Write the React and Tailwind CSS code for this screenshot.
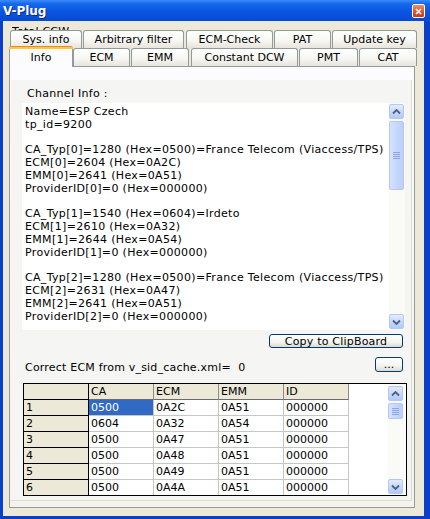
import React from "react";

const memoLines = [
  "Name=ESP Czech",
  "tp_id=9200",
  "",
  "CA_Typ[0]=1280 (Hex=0500)=France Telecom (Viaccess/TPS)",
  "ECM[0]=2604 (Hex=0A2C)",
  "EMM[0]=2641 (Hex=0A51)",
  "ProviderID[0]=0 (Hex=000000)",
  "",
  "CA_Typ[1]=1540 (Hex=0604)=Irdeto",
  "ECM[1]=2610 (Hex=0A32)",
  "EMM[1]=2644 (Hex=0A54)",
  "ProviderID[1]=0 (Hex=000000)",
  "",
  "CA_Typ[2]=1280 (Hex=0500)=France Telecom (Viaccess/TPS)",
  "ECM[2]=2631 (Hex=0A47)",
  "EMM[2]=2641 (Hex=0A51)",
  "ProviderID[2]=0 (Hex=000000)",
];

const rows = [
  ["1", "0500", "0A2C", "0A51", "000000"],
  ["2", "0604", "0A32", "0A54", "000000"],
  ["3", "0500", "0A47", "0A51", "000000"],
  ["4", "0500", "0A48", "0A51", "000000"],
  ["5", "0500", "0A49", "0A51", "000000"],
  ["6", "0500", "0A4A", "0A51", "000000"],
];

const topTabs = [
  { label: "Sys. info", w: "w-[72px]", ml: "ml-0" },
  { label: "Arbitrary filter", w: "w-[101px]", ml: "ml-[1px]" },
  { label: "ECM-Check", w: "w-[87px]", ml: "ml-[2px]" },
  { label: "PAT", w: "w-[57px]", ml: "ml-[1px]" },
  { label: "Update key", w: "w-[85px]", ml: "ml-[1px]" },
];

const frontTabs = [
  { label: "ECM", w: "w-[57px]", ml: "ml-0" },
  { label: "EMM", w: "w-[58px]", ml: "ml-[1px]" },
  { label: "Constant DCW", w: "w-[107px]", ml: "ml-[2px]" },
  { label: "PMT", w: "w-[59px]", ml: "ml-[1px]" },
  { label: "CAT", w: "w-[58px]", ml: "ml-[1px]" },
];

function Tab({ label, w, ml }) {
  return (
    <div
      className={`${w} ${ml} h-full shrink-0 flex items-center justify-center rounded-t-[3px] border border-b-0 border-[#919b9c] bg-[linear-gradient(to_bottom,#ffffff_0%,#f7f7f4_55%,#e6e4db_100%)] leading-none`}
    >
      {label}
    </div>
  );
}

function Chevron({ down }) {
  return (
    <svg width="9" height="6" viewBox="0 0 9 6">
      <path
        d={down ? "M1 1.5 L4.5 5 L8 1.5" : "M1 4.5 L4.5 1 L8 4.5"}
        fill="none"
        stroke="#4d6185"
        strokeWidth="1.8"
      />
    </svg>
  );
}

function SbButton({ down }) {
  return (
    <div className="h-[15px] w-[15px] shrink-0 rounded-[2px] border border-[#b4c8f6] bg-[linear-gradient(to_bottom,#e3ebfe,#c4d5fb_60%,#b4c9f8)] flex items-center justify-center">
      <Chevron down={down} />
    </div>
  );
}

function Thumb({ h }) {
  return (
    <div
      className={`${h} w-[15px] shrink-0 rounded-[2px] border border-[#b4c8f6] bg-[linear-gradient(to_right,#d6e2fe,#c7d7fc_50%,#bccffa)] flex flex-col items-center justify-center gap-[1px]`}
    >
      <div className="h-px w-[7px] bg-[#8da6e3]" />
      <div className="h-px w-[7px] bg-[#8da6e3]" />
      <div className="h-px w-[7px] bg-[#8da6e3]" />
      <div className="h-px w-[7px] bg-[#8da6e3]" />
    </div>
  );
}

function XpButton({ className, children }) {
  return (
    <div
      className={`${className} shrink-0 rounded-[3px] border border-[#003c74] bg-[linear-gradient(to_bottom,#ffffff,#f4f4f0_60%,#dcdad0)] flex items-center justify-center leading-none`}
    >
      {children}
    </div>
  );
}

export default function App() {
  return (
    <div className="w-[430px] h-[519px] overflow-hidden flex flex-col bg-[#0b3fc8] font-['DejaVu_Sans',Verdana,sans-serif] text-[11px] text-black">
      {/* title bar */}
      <div className="h-[21px] shrink-0 flex items-center justify-between pl-[3px] pr-[5px] pt-[1px] bg-[linear-gradient(to_bottom,#3d8cf8_0%,#1567ee_18%,#0a56e2_55%,#0749d2_100%)]">
        <span className="text-[12px] font-bold text-white [text-shadow:1px_1px_0_#0a2a86]">V-Plug</span>
        <div className="h-[14px] w-[13px] rounded-[2px] border border-white bg-[linear-gradient(to_bottom,#ec8e70,#d6522f_60%,#c43e1c)] flex items-center justify-center">
          <svg width="7" height="7" viewBox="0 0 7 7">
            <path d="M1 1 L6 6 M6 1 L1 6" stroke="#fff" strokeWidth="1.6" />
          </svg>
        </div>
      </div>

      {/* body */}
      <div className="flex-1 ml-[3px] mr-[6px] mb-[3px] bg-[#ece9d8] flex flex-col">
        <div className="mt-[3px] ml-[9px] h-[6px] overflow-hidden shrink-0">
          <div className="pt-[1px] leading-[13px] tracking-[0.2px]">Total CCW :</div>
        </div>

        <div className="flex h-[18px] ml-[7px] shrink-0">
          {topTabs.map((t) => (
            <Tab key={t.label} {...t} />
          ))}
        </div>

        <div className="flex items-start h-[18px] ml-[6px] shrink-0">
          <div className="relative z-10 -mt-[2px] h-[21px] w-[64px] shrink-0 flex flex-col rounded-t-[3px] border-x border-[#919b9c] bg-[#fcfcfe]">
            <div className="h-[3px] -mx-px rounded-t-[3px] bg-[linear-gradient(to_bottom,#e68b2c_0%,#e68b2c_34%,#ffc73c_35%)]" />
            <div className="flex-1 flex items-start justify-center pt-[2px] leading-[13px]">Info</div>
          </div>
          {frontTabs.map((t) => (
            <Tab key={t.label} {...t} />
          ))}
        </div>

        {/* tab page */}
        <div className="ml-[6px] w-[406px] h-[442px] shrink-0 border border-[#919b9c] bg-[linear-gradient(to_bottom,#fcfcfe,#f3f2ec)] flex flex-col">
          <div className="mt-[13px] ml-px w-[401px] h-[421px] border-r border-b border-[#dedcd2] bg-[#f5f5f3] flex flex-col">
            <div className="mt-[7px] ml-[16px] h-[13px] leading-[13px] tracking-[0.3px]">Channel Info :</div>

            {/* memo */}
            <div className="mt-[3px] ml-[11px] w-[383px] h-[227px] flex bg-white">
              <div className="flex-1 pl-[3px] pt-[3px] whitespace-pre leading-[12.8px] tracking-[0.33px] overflow-hidden">
                {memoLines.join("\n")}
              </div>
              <div className="w-[16px] flex flex-col items-start pt-[1px] pb-[1px] bg-[#fafaf7]">
                <SbButton />
                <div className="h-[2px]" />
                <Thumb h="h-[69px]" />
                <div className="flex-1" />
                <SbButton down />
              </div>
            </div>

            <div className="mt-[4px] ml-[258px]">
              <XpButton className="w-[134px] h-[14px] tracking-[0.2px]">Copy to ClipBoard</XpButton>
            </div>

            <div className="mt-[9px] ml-[14px] w-[378px] h-[15px] flex items-start justify-between">
              <span className="mt-[4px] leading-[13px] whitespace-pre tracking-[0.2px]">Correct ECM from v_sid_cache.xml=  0</span>
              <XpButton className="w-[28px] h-[15px]">...</XpButton>
            </div>

            {/* grid */}
            <div className="mt-[11px] ml-[12px] w-[384px] h-[113px] border border-black bg-white flex overflow-hidden">
              <div className="w-[364px] flex flex-col">
                <div className="flex h-[16px] shrink-0">
                  <div className="w-[65px] h-full bg-[#ece9d8] border-r border-b border-black" />
                  {["CA", "ECM", "EMM", "ID"].map((h) => (
                    <div
                      key={h}
                      className="w-[65px] h-full bg-[#ece9d8] border-r border-[#8c8c8c] border-b border-b-[#6b6b6b] pl-[2px] leading-[15px]"
                    >
                      {h}
                    </div>
                  ))}
                </div>
                {rows.map((r, ri) => (
                  <div key={r[0]} className="flex h-[16px] shrink-0">
                    <div className="w-[65px] h-full bg-[#ece9d8] border-r border-b border-black pl-[2px] leading-[15px]">
                      {r[0]}
                    </div>
                    {r.slice(1).map((c, ci) => (
                      <div
                        key={ci}
                        className={`w-[65px] h-full border-r border-b border-[#c6c6c6] pl-[2px] leading-[15px] ${
                          ri === 0 && ci === 0 ? "bg-[#316ac5] text-white" : ""
                        }`}
                      >
                        {c}
                      </div>
                    ))}
                  </div>
                ))}
              </div>
              <div className="w-[16px] flex flex-col items-start pt-[2px] pb-[1px] bg-[#fafaf7]">
                <SbButton />
                <div className="h-[2px]" />
                <Thumb h="h-[16px]" />
                <div className="flex-1" />
                <SbButton down />
              </div>
            </div>
          </div>
        </div>
      </div>
    </div>
  );
}
